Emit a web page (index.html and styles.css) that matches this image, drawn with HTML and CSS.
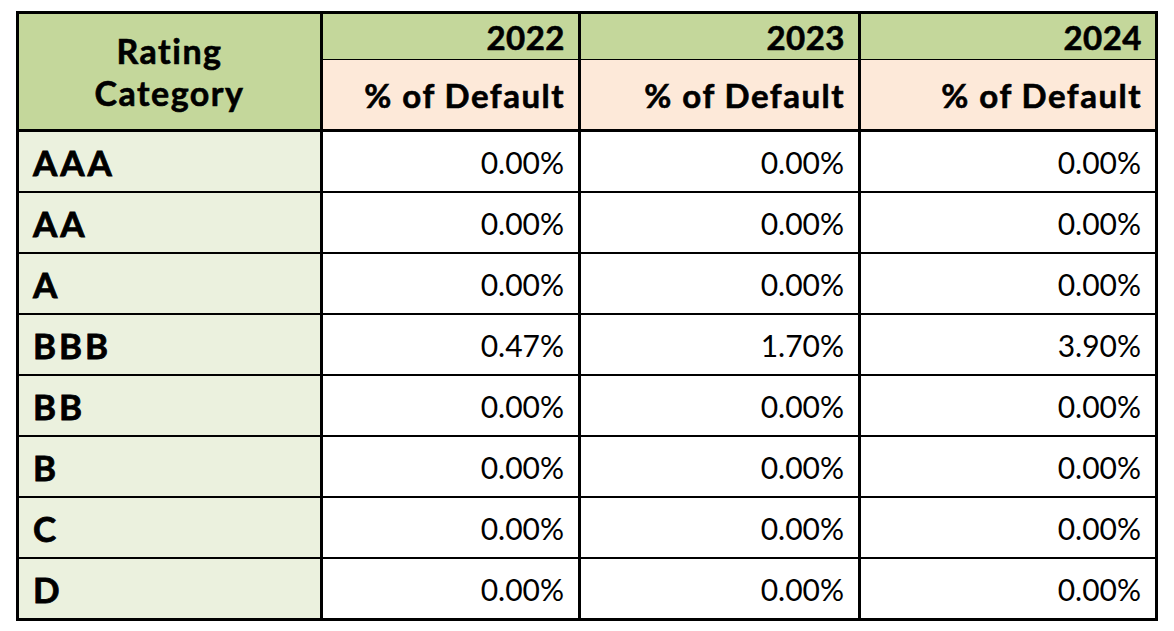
FILE: index.html
```html
<!DOCTYPE html>
<html lang="en">
<head>
<meta charset="utf-8">
<title>Rating Category – % of Default</title>
<link rel="stylesheet" href="styles.css">
</head>
<body>
<div class="wrap">
<table class="grid">
  <colgroup>
    <col class="c1"><col class="c2"><col class="c3"><col class="c4">
  </colgroup>
  <thead>
    <tr class="years">
      <th class="cat" rowspan="2">Rating<br>Category</th>
      <th class="yr">2022</th>
      <th class="yr">2023</th>
      <th class="yr last">2024</th>
    </tr>
    <tr class="subs">
      <th class="sub">% of Default</th>
      <th class="sub">% of Default</th>
      <th class="sub last">% of Default</th>
    </tr>
  </thead>
  <tbody>
    <tr><th class="lbl">AAA</th><td>0.00%</td><td>0.00%</td><td class="last">0.00%</td></tr>
    <tr><th class="lbl">AA</th><td>0.00%</td><td>0.00%</td><td class="last">0.00%</td></tr>
    <tr><th class="lbl">A</th><td>0.00%</td><td>0.00%</td><td class="last">0.00%</td></tr>
    <tr><th class="lbl">BBB</th><td>0.47%</td><td>1.70%</td><td class="last">3.90%</td></tr>
    <tr><th class="lbl">BB</th><td>0.00%</td><td>0.00%</td><td class="last">0.00%</td></tr>
    <tr><th class="lbl">B</th><td>0.00%</td><td>0.00%</td><td class="last">0.00%</td></tr>
    <tr><th class="lbl">C</th><td>0.00%</td><td>0.00%</td><td class="last">0.00%</td></tr>
    <tr class="end"><th class="lbl">D</th><td>0.00%</td><td>0.00%</td><td class="last">0.00%</td></tr>
  </tbody>
</table>
</div>
</body>
</html>
```
FILE: styles.css
```css
* { box-sizing: border-box; }
html, body { margin: 0; padding: 0; background: #ffffff; }
body { font-family: Lato, "Open Sans", "Liberation Sans", sans-serif; color: #000; }
.wrap { padding: 11px 0 0 16px; }

.grid {
  border-collapse: separate;
  border-spacing: 0;
  border: 3px solid #000;
  table-layout: fixed;
  width: 1142px;
}
.c1 { width: 304px; }
.c2 { width: 258px; }
.c3 { width: 280px; }
.c4 { width: 294px; }

.grid th, .grid td {
  padding: 0 14px 0 14px;
  border-right: 3px solid #000;
  vertical-align: middle;
  white-space: nowrap;
}
.grid .last { border-right: 0; }

.cat {
  background: #c4d79b;
  font-size: 34px;
  font-weight: 700;
  letter-spacing: 1.5px;
  line-height: 42px;
  text-align: center;
  border-bottom: 3px solid #000;
  -webkit-text-stroke: 0.6px #000;
}
.years th { height: 46px; }
.yr {
  background: #c4d79b;
  text-align: right;
  font-size: 33px;
  font-weight: 700;
  letter-spacing: 0.5px;
  border-bottom: 1px solid #000;
  -webkit-text-stroke: 0.6px #000;
}
.grid .yr, .grid .sub { padding-right: 13px; }
.subs th { height: 72px; }
.sub {
  background: #fde9d9;
  text-align: right;
  font-size: 33px;
  font-weight: 700;
  letter-spacing: 1.5px;
  border-bottom: 3px solid #000;
  -webkit-text-stroke: 0.6px #000;
}

tbody tr th, tbody tr td { height: 61px; border-bottom: 2px solid #000; }
tbody tr.end th, tbody tr.end td { height: 59px; border-bottom: 0; }

.lbl {
  background: #ebf1de;
  text-align: left;
  font-size: 35px;
  font-weight: 700;
  letter-spacing: 3px;
  -webkit-text-stroke: 0.8px #000;
}
tbody td {
  text-align: right;
  font-size: 30px;
  font-weight: 400;
}
```
